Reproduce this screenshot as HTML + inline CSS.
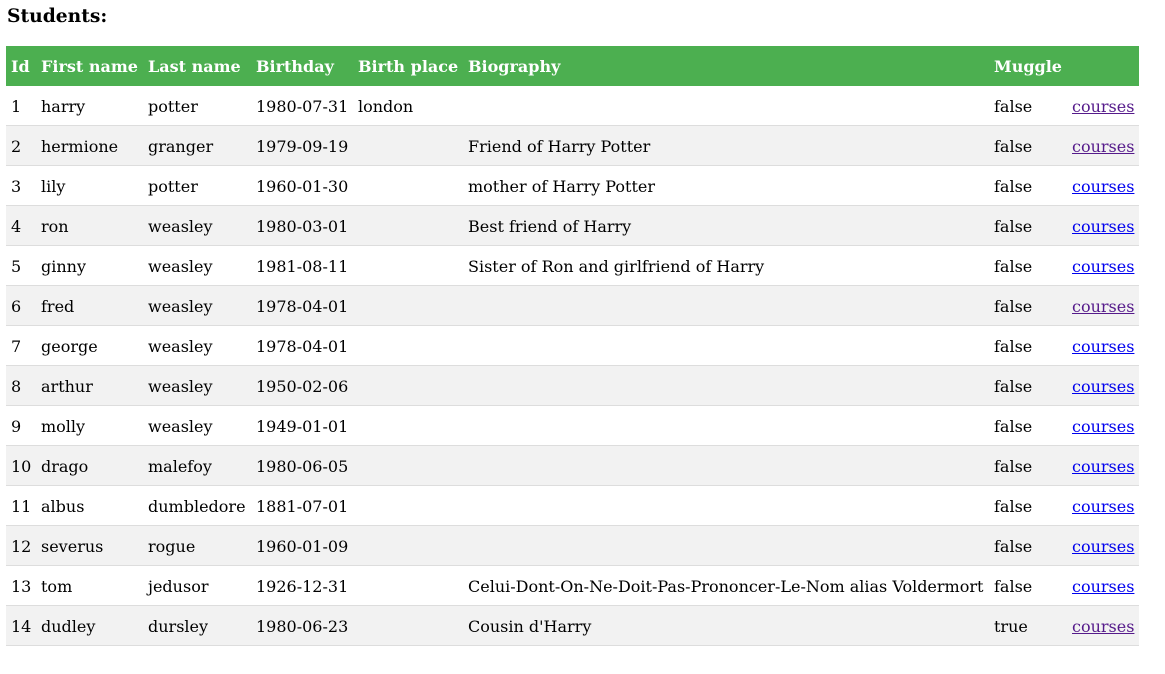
<!DOCTYPE html>
<html><head><style>
body{margin:0;background:#fff;font-family:"DejaVu Serif",serif;font-size:16px;color:#000}
h3{position:absolute;left:7px;top:5px;margin:0;font-size:18.7px;line-height:22px}
table{position:absolute;left:6px;top:46px;border-collapse:collapse;width:1133px;table-layout:fixed}
th,td{padding:1px 0 0 5px;text-align:left;white-space:nowrap;overflow:visible}
th{background:#4CAF50;color:#fff;font-weight:bold;height:39px}
td{border-bottom:1px solid #ddd;height:38px}
tr:nth-child(odd) td{background:#f2f2f2}
a{color:#0000ee}a.v{color:#551a8b}
</style></head><body>
<h3>Students:</h3>
<table>
<colgroup><col style="width:30px"><col style="width:107px"><col style="width:108px"><col style="width:102px"><col style="width:110px"><col style="width:526px"><col style="width:78px"><col style="width:72px"></colgroup>
<tr><th>Id</th><th>First name</th><th>Last name</th><th>Birthday</th><th>Birth place</th><th>Biography</th><th>Muggle</th><th></th></tr>
<tr><td>1</td><td>harry</td><td>potter</td><td>1980-07-31</td><td>london</td><td></td><td>false</td><td><a class="v" href="#">courses</a></td></tr>
<tr><td>2</td><td>hermione</td><td>granger</td><td>1979-09-19</td><td></td><td>Friend of Harry Potter</td><td>false</td><td><a class="v" href="#">courses</a></td></tr>
<tr><td>3</td><td>lily</td><td>potter</td><td>1960-01-30</td><td></td><td>mother of Harry Potter</td><td>false</td><td><a href="#">courses</a></td></tr>
<tr><td>4</td><td>ron</td><td>weasley</td><td>1980-03-01</td><td></td><td>Best friend of Harry</td><td>false</td><td><a href="#">courses</a></td></tr>
<tr><td>5</td><td>ginny</td><td>weasley</td><td>1981-08-11</td><td></td><td>Sister of Ron and girlfriend of Harry</td><td>false</td><td><a href="#">courses</a></td></tr>
<tr><td>6</td><td>fred</td><td>weasley</td><td>1978-04-01</td><td></td><td></td><td>false</td><td><a class="v" href="#">courses</a></td></tr>
<tr><td>7</td><td>george</td><td>weasley</td><td>1978-04-01</td><td></td><td></td><td>false</td><td><a href="#">courses</a></td></tr>
<tr><td>8</td><td>arthur</td><td>weasley</td><td>1950-02-06</td><td></td><td></td><td>false</td><td><a href="#">courses</a></td></tr>
<tr><td>9</td><td>molly</td><td>weasley</td><td>1949-01-01</td><td></td><td></td><td>false</td><td><a href="#">courses</a></td></tr>
<tr><td>10</td><td>drago</td><td>malefoy</td><td>1980-06-05</td><td></td><td></td><td>false</td><td><a href="#">courses</a></td></tr>
<tr><td>11</td><td>albus</td><td>dumbledore</td><td>1881-07-01</td><td></td><td></td><td>false</td><td><a href="#">courses</a></td></tr>
<tr><td>12</td><td>severus</td><td>rogue</td><td>1960-01-09</td><td></td><td></td><td>false</td><td><a href="#">courses</a></td></tr>
<tr><td>13</td><td>tom</td><td>jedusor</td><td>1926-12-31</td><td></td><td>Celui-Dont-On-Ne-Doit-Pas-Prononcer-Le-Nom alias Voldermort</td><td>false</td><td><a href="#">courses</a></td></tr>
<tr><td>14</td><td>dudley</td><td>dursley</td><td>1980-06-23</td><td></td><td>Cousin d'Harry</td><td>true</td><td><a class="v" href="#">courses</a></td></tr>
</table>
</body></html>
